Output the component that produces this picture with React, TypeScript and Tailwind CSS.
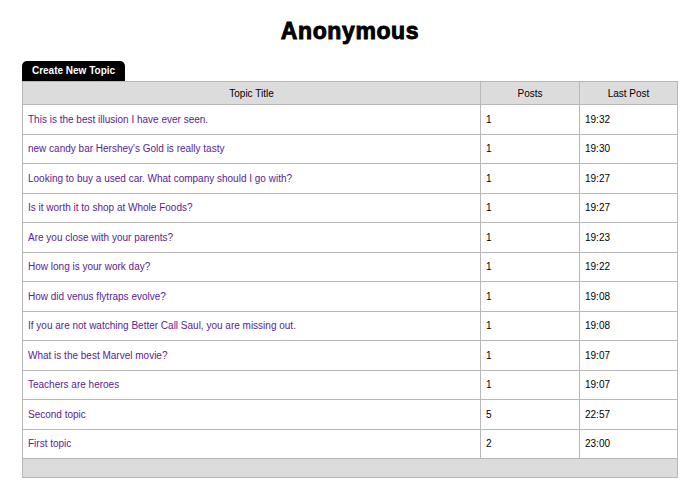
const topics = [
  { title: "This is the best illusion I have ever seen.", posts: 1, last: "19:32" },
  { title: "new candy bar Hershey's Gold is really tasty", posts: 1, last: "19:30" },
  { title: "Looking to buy a used car. What company should I go with?", posts: 1, last: "19:27" },
  { title: "Is it worth it to shop at Whole Foods?", posts: 1, last: "19:27" },
  { title: "Are you close with your parents?", posts: 1, last: "19:23" },
  { title: "How long is your work day?", posts: 1, last: "19:22" },
  { title: "How did venus flytraps evolve?", posts: 1, last: "19:08" },
  { title: "If you are not watching Better Call Saul, you are missing out.", posts: 1, last: "19:08" },
  { title: "What is the best Marvel movie?", posts: 1, last: "19:07" },
  { title: "Teachers are heroes", posts: 1, last: "19:07" },
  { title: "Second topic", posts: 5, last: "22:57" },
  { title: "First topic", posts: 2, last: "23:00" },
];

export default function App() {
  return (
    <div className="w-[700px] h-[483px] bg-white font-['Liberation_Sans',Arial,sans-serif] text-black">
      <h1 className="pt-[16px] text-center text-[23px] leading-[30px] font-bold [-webkit-text-stroke:0.9px_black] tracking-[0.6px]">
        Anonymous
      </h1>

      <div className="mx-[22px] mt-[15px]">
        {/* tab button */}
        <div className="flex">
          <button className="h-[20px] w-[103px] rounded-t-[5px] bg-black text-[10px] font-bold text-white leading-[20px]">
            Create New Topic
          </button>
        </div>

        <table className="w-[656px] border-collapse border border-[#b8b8b8] text-[10px] table-fixed">
          <thead>
            <tr className="h-[23px] bg-[#dcdcdc]">
              <th className="w-[458px] border border-[#b8b8b8] font-normal">Topic Title</th>
              <th className="w-[99px] border border-[#b8b8b8] font-normal">Posts</th>
              <th className="border border-[#b8b8b8] font-normal">Last Post</th>
            </tr>
          </thead>
          <tbody>
            {topics.map((t, i) => (
              <tr key={i} className="h-[29.5px]">
                <td className="border border-[#b8b8b8] pl-[5px] text-[#5a2392]">{t.title}</td>
                <td className="border border-[#b8b8b8] pl-[5px]">{t.posts}</td>
                <td className="border border-[#b8b8b8] pl-[5px]">{t.last}</td>
              </tr>
            ))}
            <tr className="h-[19px] bg-[#dcdcdc]">
              <td colSpan={3} className="border border-[#b8b8b8]"></td>
            </tr>
          </tbody>
        </table>
      </div>
    </div>
  );
}
